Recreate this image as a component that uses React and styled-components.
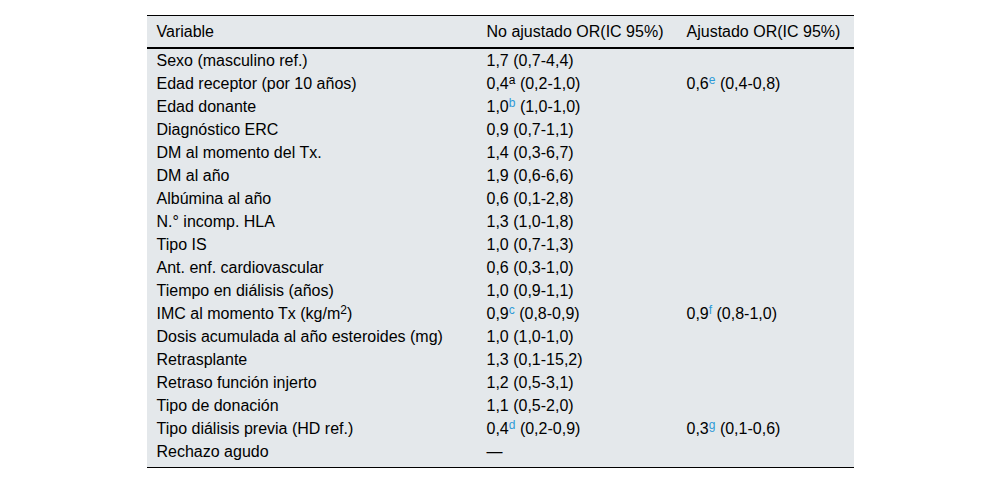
import styled, { createGlobalStyle } from 'styled-components';

const GlobalStyle = createGlobalStyle`
  body {
    margin: 0;
    background: #fff;
    font-family: "Liberation Sans", Arial, sans-serif;
    color: #000;
  }
`

const Page = styled.div`
  display: flex;
  justify-content: center;
  padding-top: 15px;
`

const Table = styled.div`
  width: 707px;
  background: #e4e8eb;
  border-top: 1px solid #000;
  border-bottom: 1px solid #000;
  padding-bottom: 4px;
  font-size: 16px;
  line-height: 23px;
`

const Row = styled.div`
  display: grid;
  grid-template-columns: 330px 200px 177px;
`

const HeadRow = styled(Row)`
  padding: 4px 0;
  border-bottom: 2px solid #000;
`

const Cell = styled.div`
  padding: 0 10px;
  white-space: nowrap;
`

const Note = styled.sup`
  font-size: 12px;
  line-height: 0;
  vertical-align: 5px;
  color: ${p => (p.$plain ? '#000' : '#2e9ad8')};
`

const rows = [
  ['Sexo (masculino ref.)', ['1,7', null, ' (0,7-4,4)'], null],
  ['Edad receptor (por 10 años)', ['0,4', 'a', ' (0,2-1,0)', true], ['0,6', 'e', ' (0,4-0,8)']],
  ['Edad donante', ['1,0', 'b', ' (1,0-1,0)'], null],
  ['Diagnóstico ERC', ['0,9', null, ' (0,7-1,1)'], null],
  ['DM al momento del Tx.', ['1,4', null, ' (0,3-6,7)'], null],
  ['DM al año', ['1,9', null, ' (0,6-6,6)'], null],
  ['Albúmina al año', ['0,6', null, ' (0,1-2,8)'], null],
  ['N.° incomp. HLA', ['1,3', null, ' (1,0-1,8)'], null],
  ['Tipo IS', ['1,0', null, ' (0,7-1,3)'], null],
  ['Ant. enf. cardiovascular', ['0,6', null, ' (0,3-1,0)'], null],
  ['Tiempo en diálisis (años)', ['1,0', null, ' (0,9-1,1)'], null],
  ['IMC', ['0,9', 'c', ' (0,8-0,9)'], ['0,9', 'f', ' (0,8-1,0)']],
  ['Dosis acumulada al año esteroides (mg)', ['1,0', null, ' (1,0-1,0)'], null],
  ['Retrasplante', ['1,3', null, ' (0,1-15,2)'], null],
  ['Retraso función injerto', ['1,2', null, ' (0,5-3,1)'], null],
  ['Tipo de donación', ['1,1', null, ' (0,5-2,0)'], null],
  ['Tipo diálisis previa (HD ref.)', ['0,4', 'd', ' (0,2-0,9)'], ['0,3', 'g', ' (0,1-0,6)']],
  ['Rechazo agudo', ['—', null, ''], null],
];

function Value({ v }) {
  if (!v) return <Cell />;
  const [num, note, range, plain] = v;
  return (
    <Cell>
      {num}
      {note && <Note $plain={plain}>{note}</Note>}
      {range}
    </Cell>
  );
}

export default function App() {
  return (
    <>
      <GlobalStyle />
      <Page>
        <Table>
          <HeadRow>
            <Cell>Variable</Cell>
            <Cell>No ajustado OR(IC 95%)</Cell>
            <Cell>Ajustado OR(IC 95%)</Cell>
          </HeadRow>
          {rows.map(([label, a, b]) => (
            <Row key={label}>
              <Cell>
                {label === 'IMC' ? <>IMC al momento Tx (kg/m<Note $plain>2</Note>)</> : label}
              </Cell>
              <Value v={a} />
              <Value v={b} />
            </Row>
          ))}
        </Table>
      </Page>
    </>
  );
}
